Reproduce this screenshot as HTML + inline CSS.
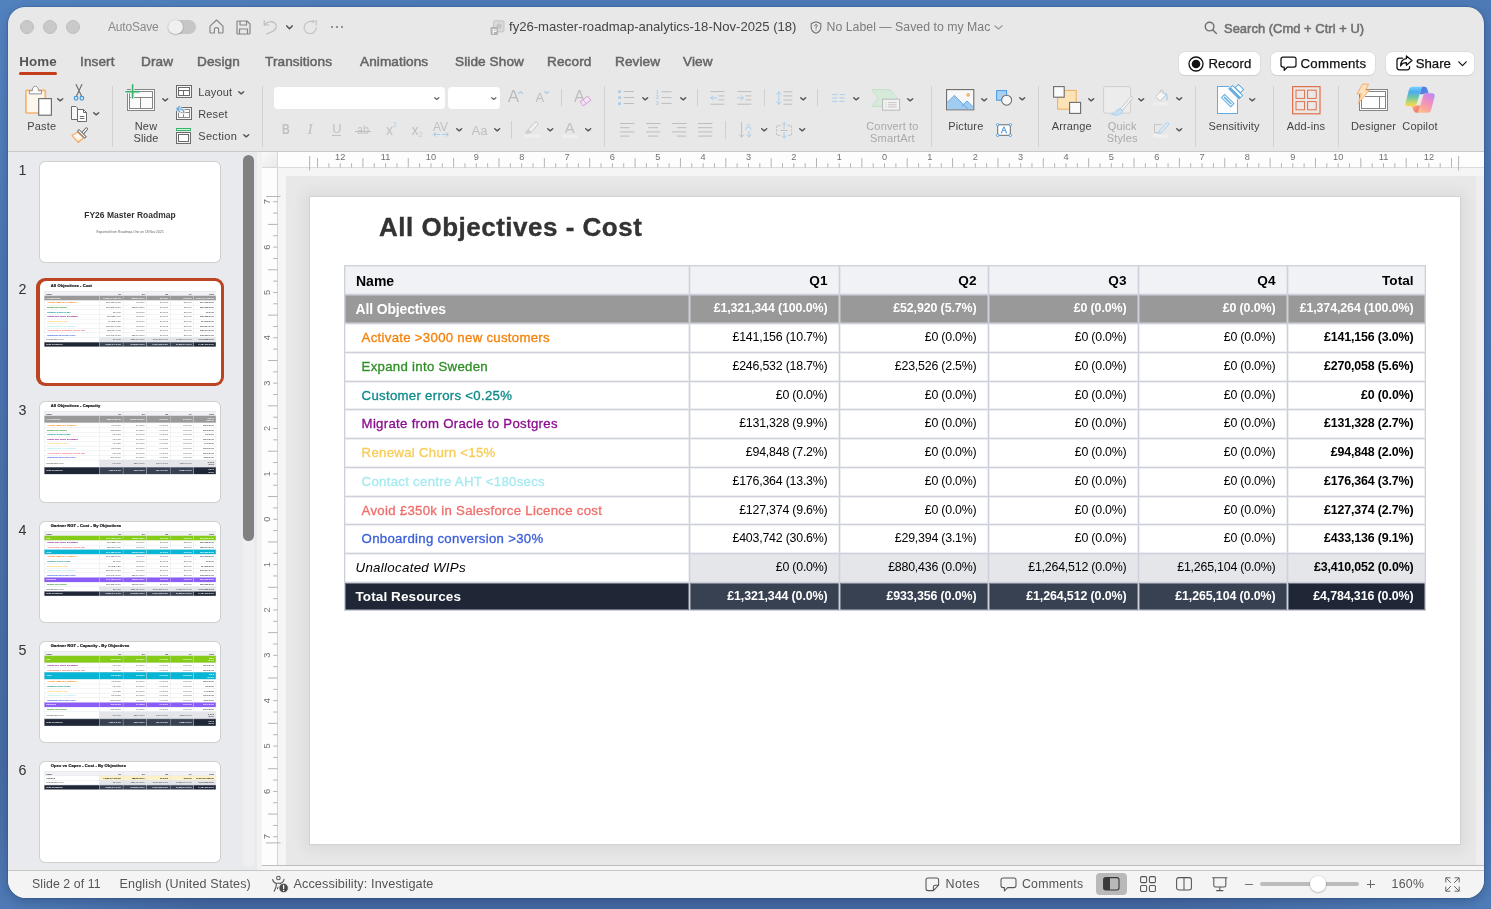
<!DOCTYPE html>
<html>
<head>
<meta charset="utf-8">
<title>PowerPoint</title>
<style>
*{box-sizing:border-box;margin:0;padding:0}
html,body{width:1491px;height:909px;overflow:hidden}
body{font-family:"Liberation Sans",sans-serif;background:#4a73ad;position:relative;
  background:radial-gradient(ellipse 700px 400px at 0% 0%,#5182be 0%,rgba(81,130,190,0) 65%),radial-gradient(ellipse 500px 260px at 100% 100%,#4f7cb7 0%,rgba(79,124,183,0) 70%),radial-gradient(ellipse 300px 200px at 0% 100%,#4e7ab5 0%,rgba(78,122,181,0) 70%),linear-gradient(180deg,#4d7ab6 0%,#4a73ad 45%,#4568a0 100%);}
.abs{position:absolute}
#win{position:absolute;left:8px;top:7px;width:1476px;height:891px;border-radius:17px 17px 18px 18px;background:#e8e8e8;overflow:hidden;box-shadow:0 0 0 .5px rgba(30,60,110,.4),0 3px 10px rgba(10,30,70,.28)}
/* everything inside #win uses page coords via #pg offset */
#pg{position:absolute;left:-8px;top:-7px;width:1491px;height:909px;will-change:transform}
.t{position:absolute;white-space:nowrap;line-height:1}
.tl{width:14px;height:14px;border-radius:50%;background:#c9c9c9;border:1px solid #bdbdbd;top:20px}
.tab{font-size:13.6px;color:#656565;top:54.5px;-webkit-text-stroke:.5px #656565;letter-spacing:.1px}
.lbl{font-size:11px;color:#454545;text-align:center;transform:translateX(-50%);letter-spacing:.15px}
.lbl.d{color:#a9a9a9}
.sep{position:absolute;margin-left:-1px;width:1px;background:#d2d2d2;top:86px;height:61px}
.ssep{position:absolute;width:1px;background:#d0d0d0}
svg{position:absolute;overflow:visible}
.btn{position:absolute;top:52px;height:22.5px;background:#fff;border-radius:6px;box-shadow:0 0 0 .5px #d4d4d4,0 .5px 1px rgba(0,0,0,.12)}
.btn .t{font-size:13.2px;color:#111;top:4.7px;-webkit-text-stroke:.25px #111}
.st{font-size:12.5px;color:#555;top:877.5px}
.num{font-size:14.3px;color:#333;left:18.6px}
.thumb{position:absolute;left:40.4px;width:179.4px;height:99.8px;background:#fff;border-radius:5px;box-shadow:0 0 0 1px #cfcfd2;overflow:hidden}
.thumb .sc{position:absolute;left:0;top:0;width:1150px;height:647px;transform:scale(.15652);transform-origin:0 0}
/* slide content */
.sc .title{-webkit-text-stroke:1.5px #222!important;color:#222}
.slide{position:absolute;background:#fff;width:1150px;height:647px;overflow:hidden}
.title{position:absolute;left:69px;top:15px;font-size:26px;font-weight:bold;color:#333;letter-spacing:.5px;line-height:30px;-webkit-text-stroke:.35px #333;white-space:nowrap}
table.g{position:absolute;left:34px;top:68px;border-collapse:separate;border-spacing:0;table-layout:fixed;width:1082px;font-size:13px;color:#000;border-right:1px solid #ced1db;border-bottom:1px solid #ced1db}
table.g td{border-left:1px solid #ced1db;border-top:1px solid #ced1db;height:29px;padding:0 11.5px 1.4px 0;text-align:right;white-space:nowrap;overflow:hidden;letter-spacing:-.22px;line-height:14px;font-size:12.4px;vertical-align:middle;box-shadow:inset 1px 1px 0 rgba(214,217,226,.42),inset -1px -1px 0 rgba(214,217,226,.42)}
table.g td:first-child{text-align:left;padding:0 0 0 10.5px;letter-spacing:0;font-size:13px}
table.g tr.h td{background:#f1f2f5;font-weight:bold;font-size:13.6px;letter-spacing:0;padding-top:2px;padding-bottom:0}
table.g tr.h td:first-child{padding-top:2px;padding-left:11px;font-size:14px}
table.g tr.all td{background:#999;color:#fff;font-weight:bold;letter-spacing:-.1px}
table.g tr.all td:first-child{font-size:13.9px;letter-spacing:-.1px;padding-top:0}
table.g tr.o td:first-child{padding-left:16.6px;font-size:13.2px;letter-spacing:.3px;-webkit-text-stroke:.32px}
table.g td:last-child{font-weight:bold;letter-spacing:-.14px}
table.g tr.u td{background:#e5e6ea}
table.g tr.u td:first-child{background:#fff;font-style:italic;font-size:13.3px;letter-spacing:.3px}
table.g tr.tot td{background:#374151;color:#fff;font-weight:bold;letter-spacing:-.1px}
table.g tr.tot td:first-child,table.g tr.tot td:last-child{background:#1f2737}
table.g tr.tot td:first-child{font-size:13.5px;letter-spacing:.1px}
table.g tr.grp td{color:#fff;font-weight:bold}
table.g.th{left:27px;top:64px;width:1098px;border-right-width:2px;border-bottom-width:2px;border-color:#d8dae2}
table.g.th td{box-shadow:none;border-left-width:2px;border-top-width:2px;border-color:#d8dae2;line-height:16px;height:29.6px;padding-top:5.8px;padding-bottom:5.8px;color:#3a3a3a}
table.g.th tr td,table.g.th tr td:first-child{padding-top:5.8px}
table.g.th tr.all td,table.g.th tr.tot td,table.g.th tr.grp td{color:#fff}
</style>
</head>
<body>
<div id="win"><div id="pg">
<!-- ===== TITLE BAR ===== -->
<div class="abs tl" style="left:20px"></div>
<div class="abs tl" style="left:43px"></div>
<div class="abs tl" style="left:66px"></div>
<div class="t" style="left:108px;top:20.5px;font-size:12px;color:#8a8a8a;letter-spacing:-.18px">AutoSave</div>
<div class="abs" style="left:168px;top:20px;width:28px;height:14px;border-radius:7px;background:#c6c6c6"></div>
<div class="abs" style="left:168px;top:19.5px;width:14.5px;height:14.5px;border-radius:50%;background:#f0f0f0;box-shadow:0 .5px 1.5px rgba(0,0,0,.35)"></div>
<!-- home -->
<svg style="left:209px;top:19px" width="15" height="15" viewBox="0 0 15 15" fill="none" stroke="#858585" stroke-width="1.15" stroke-linejoin="round" stroke-linecap="round"><path d="M1 7.2 L7.5 1 L14 7.2 V13.2 Q14 14 13.2 14 H9.6 V9.8 Q9.6 8.6 7.5 8.6 Q5.4 8.6 5.4 9.8 V14 H1.8 Q1 14 1 13.2 Z"/></svg>
<!-- save -->
<svg style="left:236px;top:19.5px" width="15" height="15" viewBox="0 0 15 15" fill="none" stroke="#858585" stroke-width="1.15" stroke-linejoin="round"><path d="M2 1 H11 L14 4 V13 Q14 14 13 14 H2 Q1 14 1 13 V2 Q1 1 2 1 Z"/><path d="M4 1 V5 H10.5 V1"/><path d="M3.5 14 V9 H11.5 V14"/></svg>
<!-- undo -->
<svg style="left:263px;top:19px" width="15" height="16" viewBox="0 0 15 16" fill="none" stroke="#bcbcbc" stroke-width="1.15" stroke-linecap="round" stroke-linejoin="round"><path d="M1.2 1.5 V6 H5.8"/><path d="M1.5 5.8 C4 2.2 9.5 1.6 12.2 4.4 C14.6 7 13 10 10 12.2 L3.5 15"/></svg>
<svg style="left:285.5px;top:24.5px" width="7" height="5" viewBox="0 0 7 5" fill="none" stroke="#555" stroke-width="1.5" stroke-linecap="round" stroke-linejoin="round"><path d="M.8 .9 L3.5 3.8 L6.2 .9"/></svg>
<!-- redo -->
<svg style="left:303px;top:19.5px" width="15" height="15" viewBox="0 0 15 15" fill="none" stroke="#c2c2c2" stroke-width="1.15" stroke-linecap="round" stroke-linejoin="round"><path d="M13.3 7.6 A6.1 6.1 0 1 1 10.6 2.5"/><path d="M9.2 .9 L13.4 1.1 L13.1 5"/></svg>
<!-- dots -->
<div class="abs" style="left:330.5px;top:25.8px;width:2.6px;height:2.6px;border-radius:50%;background:#777;box-shadow:5px 0 0 #777,10px 0 0 #777"></div>
<!-- doc icon -->
<svg style="left:490px;top:20px" width="15" height="16" viewBox="0 0 15 16"><rect x="3.5" y=".8" width="10.5" height="11" rx="1.2" fill="#d9d9d9" stroke="#bdbdbd" stroke-width=".8"/><circle cx="9" cy="6" r="2.6" fill="#c4c4c4"/><rect x=".5" y="7" width="7.5" height="8" rx="1.2" fill="#b4b4b4"/><text x="2.2" y="13.6" font-family="Liberation Sans" font-size="7" font-weight="bold" fill="#fff">P</text></svg>
<div class="t" style="left:509px;top:20.3px;font-size:13.1px;color:#454545">fy26-master-roadmap-analytics-18-Nov-2025 (18)</div>
<!-- shield -->
<svg style="left:809.5px;top:20.5px" width="12" height="13" viewBox="0 0 12 13" fill="none" stroke="#6f6f6f" stroke-width="1.05" stroke-linejoin="round"><path d="M6 .8 L10.8 2.5 V6.2 C10.8 9.3 8.6 11.3 6 12.3 C3.4 11.3 1.2 9.3 1.2 6.2 V2.5 Z"/><path d="M4.7 4.9 Q4.8 3.6 6 3.6 Q7.3 3.6 7.3 4.8 Q7.3 5.6 6 6.3 V7.2" stroke-width=".95" stroke-linecap="round"/><circle cx="6" cy="9" r=".6" fill="#6f6f6f" stroke="none"/></svg>
<div class="t" style="left:826.5px;top:20.6px;font-size:12.3px;color:#7c7c7c;letter-spacing:.02px">No Label — Saved to my Mac</div>
<svg style="left:993.5px;top:24.5px" width="9" height="5" viewBox="0 0 9 5" fill="none" stroke="#9a9a9a" stroke-width="1.2" stroke-linecap="round" stroke-linejoin="round"><path d="M.8 .8 L4.5 4 L8.2 .8"/></svg>
<!-- search -->
<svg style="left:1204px;top:21px" width="14" height="14" viewBox="0 0 14 14" fill="none" stroke="#6e6e6e" stroke-width="1.4" stroke-linecap="round"><circle cx="5.6" cy="5.6" r="4.3"/><path d="M8.9 8.9 L12.4 12.4"/></svg>
<div class="t" style="left:1224px;top:23.1px;font-size:12.9px;color:#707070;-webkit-text-stroke:.55px #707070;letter-spacing:.05px">Search (Cmd + Ctrl + U)</div>

<!-- ===== TABS ===== -->
<div class="t tab" style="left:19.3px;font-weight:bold;font-size:13.4px;color:#555;-webkit-text-stroke:0">Home</div>
<div class="abs" style="left:19px;top:71.7px;width:38px;height:3px;border-radius:1.5px;background:#c43e1c"></div>
<div class="t tab" style="left:80px">Insert</div>
<div class="t tab" style="left:141px">Draw</div>
<div class="t tab" style="left:197px">Design</div>
<div class="t tab" style="left:265px">Transitions</div>
<div class="t tab" style="left:360px">Animations</div>
<div class="t tab" style="left:455px">Slide Show</div>
<div class="t tab" style="left:547px">Record</div>
<div class="t tab" style="left:615px">Review</div>
<div class="t tab" style="left:683px">View</div>
<!-- right buttons -->
<div class="btn" style="left:1178.5px;width:81px">
  <svg style="left:9px;top:3.5px" width="16" height="16" viewBox="0 0 16 16"><circle cx="8" cy="8" r="7" fill="none" stroke="#111" stroke-width="1.3"/><circle cx="8" cy="8" r="4.3" fill="#111"/></svg>
  <div class="t" style="left:30px;letter-spacing:.05px">Record</div></div>
<div class="btn" style="left:1271px;width:103.5px">
  <svg style="left:9px;top:4px" width="17" height="16" viewBox="0 0 17 16" fill="none" stroke="#111" stroke-width="1.25" stroke-linejoin="round"><path d="M3 1 H14 Q16 1 16 3 V9 Q16 11 14 11 H7.5 L4.2 14.4 V11 H3 Q1 11 1 9 V3 Q1 1 3 1 Z"/></svg>
  <div class="t" style="left:29.6px;letter-spacing:.25px">Comments</div></div>
<div class="btn" style="left:1385.5px;width:88px">
  <svg style="left:10px;top:3px" width="17" height="16" viewBox="0 0 17 16" fill="none" stroke="#111" stroke-width="1.25" stroke-linejoin="round" stroke-linecap="round"><path d="M6.5 3.2 H3.2 Q1 3.2 1 5.4 V12.6 Q1 14.8 3.2 14.8 H11.4 Q13.6 14.8 13.6 12.6 V11.6"/><path d="M10.4 .9 L16 5.6 L10.4 10.3 V7.6 C7.4 7.5 5.6 8.8 4.6 11 C4.8 6.6 7 3.9 10.4 3.6 Z"/></svg>
  <div class="t" style="left:30.2px">Share</div>
  <svg style="left:72.5px;top:9px" width="9" height="6" viewBox="0 0 9 6" fill="none" stroke="#111" stroke-width="1.2" stroke-linecap="round" stroke-linejoin="round"><path d="M.8 .8 L4.5 4.6 L8.2 .8"/></svg></div>
<!-- ===== RIBBON ===== -->
<svg style="left:24px;top:85px" width="30" height="32" viewBox="0 0 30 32" ><rect x="1.9" y="5.4" width="19.4" height="22.6" rx=".8" fill="#fdf6ec" stroke="#f3b56f" stroke-width="1.7"/><path d="M5.3 8.9 V5.7 H8.3 Q8.5 1.3 11.4 1.3 Q14.3 1.3 14.5 5.7 H17.5 V8.9 Z" fill="#fbfbfb" stroke="#8c8c8c" stroke-width=".95" stroke-linejoin="round"/><rect x="14.7" y="13.6" width="12.7" height="16.6" fill="#fff" stroke="#6b6b6b" stroke-width="1.15"/></svg>
<svg style="left:57.0px;top:98.0px" width="6.4" height="3.6" viewBox="0 0 6.4 3.6" fill="none" stroke="#555" stroke-width="1.4" stroke-linecap="round" stroke-linejoin="round"><path d="M.7 .7 L3.2 2.9000000000000004 L5.7 .7"/></svg>
<div class="t lbl" style="left:41.8px;top:121.1px;font-size:11px">Paste</div>
<svg style="left:73px;top:84px" width="12" height="17" viewBox="0 0 12 17" ><path d="M3.1 .6 L8.7 12.5 M8.9 .6 L3.3 12.5" stroke="#6b6b6b" stroke-width="1.1" fill="none" stroke-linecap="round"/><circle cx="3.1" cy="14.2" r="1.85" fill="none" stroke="#3f98de" stroke-width="1.15"/><circle cx="8.9" cy="14.2" r="1.85" fill="none" stroke="#3f98de" stroke-width="1.15"/></svg>
<svg style="left:70px;top:105px" width="18" height="18" viewBox="0 0 18 18" ><path d="M7.5 4.5 V3 L6 1.5 H1.5 V14.5 H7.5" fill="#f8f8f8" stroke="#6b6b6b" stroke-width="1" stroke-linejoin="round"/><path d="M7.5 4.5 H13.5 L16.5 7.5 V16.5 H7.5 Z" fill="#fff" stroke="#6b6b6b" stroke-width="1" stroke-linejoin="round"/><path d="M13.5 4.5 V7.5 H16.5" fill="none" stroke="#6b6b6b" stroke-width="1"/><path d="M9.8 11.5 H14.3 M9.8 13.5 H14.3" stroke="#6b6b6b" stroke-width="1"/></svg>
<svg style="left:92.8px;top:112.2px" width="6.4" height="3.6" viewBox="0 0 6.4 3.6" fill="none" stroke="#555" stroke-width="1.4" stroke-linecap="round" stroke-linejoin="round"><path d="M.7 .7 L3.2 2.9000000000000004 L5.7 .7"/></svg>
<svg style="left:70px;top:127px" width="19" height="17" viewBox="0 0 19 17" ><defs><linearGradient id="fp" x1=".6" y1="0" x2=".3" y2="1"><stop offset="0" stop-color="#ffffff"/><stop offset=".55" stop-color="#fff6ea"/><stop offset="1" stop-color="#fbcf98"/></linearGradient></defs><path d="M7.6 5.2 L2 8.4 L8.1 15.5 L13.4 11 Z" fill="url(#fp)" stroke="#f0a45e" stroke-width="1.05" stroke-linejoin="round"/><path d="M12.6 6.4 L16.4 2" stroke="#6b6b6b" stroke-width="3.2" stroke-linecap="round"/><path d="M12.6 6.4 L16.4 2" stroke="#fff" stroke-width="1.3" stroke-linecap="round"/><path d="M9 4 L14.7 9.7" stroke="#6b6b6b" stroke-width="3" stroke-linecap="square"/><path d="M9 4 L14.7 9.7" stroke="#fff" stroke-width="1.2" stroke-linecap="square"/></svg>
<div class="sep" style="left:112.5px"></div>
<svg style="left:125px;top:83px" width="31" height="29" viewBox="0 0 31 29" ><rect x="2.5" y="6.5" width="27" height="21" fill="#fdfdfd" stroke="#858585" stroke-width="1"/><rect x="4.5" y="8.5" width="23" height="17" fill="#fbfbfb" stroke="#858585" stroke-width="1"/><path d="M4.5 14.5 H27.5 M15.5 14.5 V25.5" stroke="#858585" stroke-width="1"/><path d="M7.6 1.2 V15.6 M.4 8.8 H14.8" stroke="#e8e8e8" stroke-width="3.6"/><path d="M7.6 1.2 V15.6 M.4 8.8 H14.8" stroke="#35b36a" stroke-width="1.5"/></svg>
<svg style="left:161.8px;top:98.0px" width="6.4" height="3.6" viewBox="0 0 6.4 3.6" fill="none" stroke="#555" stroke-width="1.4" stroke-linecap="round" stroke-linejoin="round"><path d="M.7 .7 L3.2 2.9000000000000004 L5.7 .7"/></svg>
<div class="t lbl" style="left:146px;top:121.1px;font-size:11px">New</div>
<div class="t lbl" style="left:146px;top:132.7px;font-size:11px">Slide</div>
<svg style="left:176px;top:85px" width="16" height="13" viewBox="0 0 16 13" ><rect x=".5" y=".5" width="15" height="12" fill="#f5f5f5" stroke="#6b6b6b" stroke-width="1"/><rect x="2.5" y="2.5" width="11" height="8" fill="#fff" stroke="#6b6b6b" stroke-width="1"/><path d="M2.5 5.5 H13.5 M7.5 5.5 V10.5" stroke="#6b6b6b" stroke-width="1"/></svg>
<div class="t" style="left:198.3px;top:86.8px;font-size:11px;color:#454545;letter-spacing:.15px">Layout</div>
<svg style="left:237.8px;top:90.6px" width="6.4" height="3.6" viewBox="0 0 6.4 3.6" fill="none" stroke="#555" stroke-width="1.4" stroke-linecap="round" stroke-linejoin="round"><path d="M.7 .7 L3.2 2.9000000000000004 L5.7 .7"/></svg>
<svg style="left:176px;top:106px" width="16" height="15" viewBox="0 0 16 15" ><rect x=".5" y="1.5" width="15" height="12" fill="#f5f5f5" stroke="#6b6b6b" stroke-width="1"/><rect x="2.5" y="3.5" width="11" height="8" fill="#fff" stroke="#8a8a8a" stroke-width="1"/><path d="M2.5 6.5 H13.5 M7.5 6.5 V11.5" stroke="#8a8a8a" stroke-width="1"/><path d="M3.6 .4 L.9 3 L3.6 5.6 M1 3 H4.4 Q7.8 3 7.8 6.8" fill="none" stroke="#e8e8e8" stroke-width="3.2" stroke-linecap="round" stroke-linejoin="round"/><path d="M3.6 .4 L.9 3 L3.6 5.6 M1 3 H4.4 Q7.8 3 7.8 6.8" fill="none" stroke="#56a6e4" stroke-width="1.2" stroke-linecap="round" stroke-linejoin="round"/></svg>
<div class="t" style="left:198.3px;top:108.8px;font-size:11px;color:#454545;letter-spacing:.1px">Reset</div>
<svg style="left:176px;top:128px" width="16" height="17" viewBox="0 0 16 17" ><rect x=".5" y=".5" width="14" height="2" fill="#d6f2e0" stroke="#37b46c" stroke-width="1"/><rect x=".5" y="4.5" width="14" height="11" fill="#f5f5f5" stroke="#6b6b6b" stroke-width="1"/><rect x="2.5" y="6.5" width="10" height="7" fill="#fff" stroke="#6b6b6b" stroke-width="1"/></svg>
<div class="t" style="left:198.3px;top:130.6px;font-size:11px;color:#454545;letter-spacing:.3px">Section</div>
<svg style="left:242.8px;top:134.4px" width="6.4" height="3.6" viewBox="0 0 6.4 3.6" fill="none" stroke="#555" stroke-width="1.4" stroke-linecap="round" stroke-linejoin="round"><path d="M.7 .7 L3.2 2.9000000000000004 L5.7 .7"/></svg>
<div class="sep" style="left:262.5px"></div>
<div class="abs" style="left:274px;top:86.5px;width:170.5px;height:22.5px;background:#fff;border-radius:4px"></div>
<svg style="left:434.2px;top:96.7px" width="5.6" height="3.2" viewBox="0 0 5.6 3.2" fill="none" stroke="#666" stroke-width="1.2" stroke-linecap="round" stroke-linejoin="round"><path d="M.7 .7 L2.8 2.5 L4.8999999999999995 .7"/></svg>
<div class="abs" style="left:447.8px;top:86.5px;width:52.4px;height:22.5px;background:#fff;border-radius:4px"></div>
<svg style="left:490.6px;top:96.7px" width="5.6" height="3.2" viewBox="0 0 5.6 3.2" fill="none" stroke="#666" stroke-width="1.2" stroke-linecap="round" stroke-linejoin="round"><path d="M.7 .7 L2.8 2.5 L4.8999999999999995 .7"/></svg>
<div class="t" style="left:507.7px;top:88.1px;font-size:17px;color:#bcbcbc">A</div>
<svg style="left:518.1px;top:91.4px" width="5.2" height="3.0" viewBox="0 0 5.2 3.0" fill="none" stroke="#a3cdee" stroke-width="1.2" stroke-linecap="round" stroke-linejoin="round"><path d="M.7 2.3 L2.6 .7 L4.5 2.3"/></svg>
<div class="t" style="left:535.5px;top:92.1px;font-size:12.9px;color:#bcbcbc">A</div>
<svg style="left:544.0px;top:91.2px" width="5.2" height="3.0" viewBox="0 0 5.2 3.0" fill="none" stroke="#a3cdee" stroke-width="1.2" stroke-linecap="round" stroke-linejoin="round"><path d="M.7 .7 L2.6 2.3 L4.5 .7"/></svg>
<div class="ssep" style="left:560.6px;top:89px;height:17px"></div>
<div class="t" style="left:574px;top:88.6px;font-size:16px;color:#bcbcbc">A</div>
<svg style="left:580px;top:96px" width="11" height="10" viewBox="0 0 11 10" ><g transform="rotate(-38 5.5 5)"><rect x=".8" y="2.4" width="9.4" height="5.2" fill="#f3e6f4" stroke="#d7a5db" stroke-width=".95"/><path d="M4.4 2.4 V7.6" stroke="#d7a5db" stroke-width=".9"/></g></svg>
<div class="t" style="left:281.6px;top:122.6px;font-size:13.8px;font-weight:bold;color:#c0c0c0;transform:scaleX(.78);transform-origin:0 50%">B</div>
<div class="t" style="left:307.6px;top:121.3px;font-size:15.6px;font-style:italic;color:#c0c0c0;font-family:'Liberation Serif',serif">I</div>
<div class="t" style="left:332.2px;top:122.8px;font-size:12.8px;color:#c0c0c0;border-bottom:1px solid #c0c0c0;padding-bottom:0;height:12.8px;box-sizing:border-box">U</div>
<div class="t" style="left:356.6px;top:122.9px;font-size:13.2px;color:#c4c4c4;transform:scaleX(.82);transform-origin:0 50%">ab</div>
<div class="abs" style="left:354.8px;top:131.2px;width:16.2px;height:1px;background:#bdbdbd"></div>
<div class="t" style="left:386px;top:122.6px;font-size:14px;color:#c0c0c0">x</div>
<div class="t" style="left:393px;top:122.2px;font-size:6.3px;color:#a9cdea">2</div>
<div class="t" style="left:411.6px;top:122.6px;font-size:14px;color:#c0c0c0">x</div>
<div class="t" style="left:419px;top:132px;font-size:6.5px;color:#a9cdea">2</div>
<div class="t" style="left:433px;top:120.8px;font-size:12px;color:#c0c0c0;letter-spacing:0">AV</div>
<svg style="left:433.2px;top:132.2px" width="16" height="5" viewBox="0 0 16 5" ><path d="M.6 2.5 H6.8 M9.2 2.5 H15.4 M2.8 .5 L.6 2.5 L2.8 4.5 M13.2 .5 L15.4 2.5 L13.2 4.5" fill="none" stroke="#a9cdea" stroke-width="1" stroke-linecap="round" stroke-linejoin="round"/></svg>
<svg style="left:455.6px;top:128.2px" width="6.4" height="3.6" viewBox="0 0 6.4 3.6" fill="none" stroke="#555" stroke-width="1.4" stroke-linecap="round" stroke-linejoin="round"><path d="M.7 .7 L3.2 2.9000000000000004 L5.7 .7"/></svg>
<div class="t" style="left:471.4px;top:123.6px;font-size:13px;color:#c0c0c0;letter-spacing:.3px">Aa</div>
<svg style="left:493.7px;top:128.2px" width="6.4" height="3.6" viewBox="0 0 6.4 3.6" fill="none" stroke="#555" stroke-width="1.4" stroke-linecap="round" stroke-linejoin="round"><path d="M.7 .7 L3.2 2.9000000000000004 L5.7 .7"/></svg>
<div class="ssep" style="left:511.2px;top:121px;height:17.5px"></div>
<svg style="left:524px;top:121px" width="17" height="17" viewBox="0 0 17 17" ><path d="M4.2 8.6 L10.8 1.4 Q12 .4 13.4 1.6 Q14.6 3 13.6 4.2 L7 11.4 Z" fill="#f1f1f1" stroke="#c6c6c6" stroke-width="1" stroke-linejoin="round"/><path d="M4 8.8 L6.8 11.6 L4 12.4 L1.6 12.2 Z" fill="#d0d0d0" stroke="#c6c6c6" stroke-width=".7" stroke-linejoin="round"/><rect x=".4" y="13.5" width="15.6" height="3" fill="#efefef"/></svg>
<svg style="left:546.5px;top:128.2px" width="6.4" height="3.6" viewBox="0 0 6.4 3.6" fill="none" stroke="#555" stroke-width="1.4" stroke-linecap="round" stroke-linejoin="round"><path d="M.7 .7 L3.2 2.9000000000000004 L5.7 .7"/></svg>
<div class="t" style="left:564.8px;top:120.2px;font-size:15px;color:#c0c0c0">A</div>
<div class="abs" style="left:562px;top:134.5px;width:15.6px;height:3px;background:#efefef"></div>
<svg style="left:584.6px;top:128.2px" width="6.4" height="3.6" viewBox="0 0 6.4 3.6" fill="none" stroke="#555" stroke-width="1.4" stroke-linecap="round" stroke-linejoin="round"><path d="M.7 .7 L3.2 2.9000000000000004 L5.7 .7"/></svg>
<div class="sep" style="left:604.5px"></div>
<svg style="left:618px;top:90px" width="16" height="15" viewBox="0 0 16 15" ><rect x=".2" y="0.19999999999999996" width="2.8" height="2.8" fill="#a9cdea"/><path d="M5.6 1.5 H16" stroke="#bdbdbd" stroke-width="1"/><rect x=".2" y="6.2" width="2.8" height="2.8" fill="#a9cdea"/><path d="M5.6 7.5 H16" stroke="#bdbdbd" stroke-width="1"/><rect x=".2" y="12.2" width="2.8" height="2.8" fill="#a9cdea"/><path d="M5.6 13.5 H16" stroke="#bdbdbd" stroke-width="1"/></svg>
<svg style="left:641.8px;top:96.5px" width="6.4" height="3.6" viewBox="0 0 6.4 3.6" fill="none" stroke="#555" stroke-width="1.4" stroke-linecap="round" stroke-linejoin="round"><path d="M.7 .7 L3.2 2.9000000000000004 L5.7 .7"/></svg>
<svg style="left:656.4px;top:90px" width="16" height="15" viewBox="0 0 16 15" ><text x="0" y="3.6" font-size="4.8" font-family="Liberation Sans" font-weight="bold" fill="#a9cdea">1</text><path d="M5.4 1.8 H15.6" stroke="#bdbdbd" stroke-width="1"/><text x="0" y="9.4" font-size="4.8" font-family="Liberation Sans" font-weight="bold" fill="#a9cdea">2</text><path d="M5.4 7.6 H15.6" stroke="#bdbdbd" stroke-width="1"/><text x="0" y="15.200000000000001" font-size="4.8" font-family="Liberation Sans" font-weight="bold" fill="#a9cdea">3</text><path d="M5.4 13.4 H15.6" stroke="#bdbdbd" stroke-width="1"/></svg>
<svg style="left:679.6px;top:96.5px" width="6.4" height="3.6" viewBox="0 0 6.4 3.6" fill="none" stroke="#555" stroke-width="1.4" stroke-linecap="round" stroke-linejoin="round"><path d="M.7 .7 L3.2 2.9000000000000004 L5.7 .7"/></svg>
<div class="ssep" style="left:697.4px;top:89px;height:17.400000000000006px"></div>
<svg style="left:710.4px;top:90.6px" width="15" height="14" viewBox="0 0 15 14" ><path d="M.4 .6 H14.4 M8.4 4.9 H14.4 M8.4 8.9 H14.4 M.4 13.2 H14.4" stroke="#bdbdbd" stroke-width="1"/><path d="M.8 6.9 H6.6 M3 4.8 L.8 6.9 L3 9" fill="none" stroke="#a9cdea" stroke-width="1" stroke-linecap="round" stroke-linejoin="round"/></svg>
<svg style="left:736.6px;top:90.6px" width="15" height="14" viewBox="0 0 15 14" ><path d="M.4 .6 H14.4 M8.4 4.9 H14.4 M8.4 8.9 H14.4 M.4 13.2 H14.4" stroke="#bdbdbd" stroke-width="1"/><path d="M.6 6.9 H6.4 M4.2 4.8 L6.4 6.9 L4.2 9" fill="none" stroke="#a9cdea" stroke-width="1" stroke-linecap="round" stroke-linejoin="round"/></svg>
<div class="ssep" style="left:764.2px;top:89px;height:17.400000000000006px"></div>
<svg style="left:776.4px;top:90.6px" width="17" height="14" viewBox="0 0 17 14" ><path d="M7.4 .8 H16.4 M7.4 4.9 H16.4 M7.4 9 H16.4 M7.4 13.2 H16.4" stroke="#bdbdbd" stroke-width="1"/><path d="M2.8 .8 V13.2 M.6 3 L2.8 .8 L5 3 M.6 11 L2.8 13.2 L5 11" fill="none" stroke="#a9cdea" stroke-width="1" stroke-linecap="round" stroke-linejoin="round"/></svg>
<svg style="left:799.8px;top:96.5px" width="6.4" height="3.6" viewBox="0 0 6.4 3.6" fill="none" stroke="#555" stroke-width="1.4" stroke-linecap="round" stroke-linejoin="round"><path d="M.7 .7 L3.2 2.9000000000000004 L5.7 .7"/></svg>
<div class="ssep" style="left:817.4px;top:89px;height:17.400000000000006px"></div>
<svg style="left:831.8px;top:93.6px" width="13" height="8" viewBox="0 0 13 8" ><path d="M.2 .6 H5.4 M7.4 .6 H12.6 M.2 4 H5.4 M7.4 4 H12.6 M.2 7.4 H5.4 M7.4 7.4 H12.6" stroke="#a9cdea" stroke-width="1"/></svg>
<svg style="left:852.7px;top:96.5px" width="6.4" height="3.6" viewBox="0 0 6.4 3.6" fill="none" stroke="#555" stroke-width="1.4" stroke-linecap="round" stroke-linejoin="round"><path d="M.7 .7 L3.2 2.9000000000000004 L5.7 .7"/></svg>
<svg style="left:871px;top:89px" width="30" height="22" viewBox="0 0 30 22" ><path d="M.8 .6 H19 L26 9 L19 17.4 H.8 L7 9 Z" fill="#d5ead9" stroke="#c2dfc8" stroke-width=".9" stroke-linejoin="round"/><rect x="11.6" y="10.2" width="17" height="11" fill="#f2f2f2" stroke="#b9b9b9" stroke-width="1"/><path d="M14.6 13.6 H15.6 M17.2 13.6 H25.6 M14.6 15.8 H15.6 M17.2 15.8 H25.6 M14.6 18 H15.6 M17.2 18 H25.6" stroke="#b9b9b9" stroke-width=".8"/></svg>
<svg style="left:906.5px;top:98.2px" width="6.4" height="3.6" viewBox="0 0 6.4 3.6" fill="none" stroke="#555" stroke-width="1.4" stroke-linecap="round" stroke-linejoin="round"><path d="M.7 .7 L3.2 2.9000000000000004 L5.7 .7"/></svg>
<div class="t lbl d" style="left:892.4px;top:121.3px;font-size:11px">Convert to</div>
<div class="t lbl d" style="left:892.4px;top:132.9px;font-size:11px">SmartArt</div>
<svg style="left:619.6px;top:122.8px" width="15" height="14" viewBox="0 0 15 14" ><path d="M0 0.5 H14.4" stroke="#bdbdbd" stroke-width="1"/><path d="M0 4.7 H9.6" stroke="#bdbdbd" stroke-width="1"/><path d="M0 8.9 H14.4" stroke="#bdbdbd" stroke-width="1"/><path d="M0 13.100000000000001 H9.6" stroke="#bdbdbd" stroke-width="1"/></svg>
<svg style="left:645.6px;top:122.8px" width="15" height="14" viewBox="0 0 15 14" ><path d="M0 0.5 H14.4" stroke="#bdbdbd" stroke-width="1"/><path d="M2.4 4.7 H12" stroke="#bdbdbd" stroke-width="1"/><path d="M0 8.9 H14.4" stroke="#bdbdbd" stroke-width="1"/><path d="M2.4 13.100000000000001 H12" stroke="#bdbdbd" stroke-width="1"/></svg>
<svg style="left:671.8px;top:122.8px" width="15" height="14" viewBox="0 0 15 14" ><path d="M0 0.5 H14.4" stroke="#bdbdbd" stroke-width="1"/><path d="M4.8 4.7 H14.4" stroke="#bdbdbd" stroke-width="1"/><path d="M0 8.9 H14.4" stroke="#bdbdbd" stroke-width="1"/><path d="M4.8 13.100000000000001 H14.4" stroke="#bdbdbd" stroke-width="1"/></svg>
<svg style="left:698px;top:122.8px" width="15" height="14" viewBox="0 0 15 14" ><path d="M0 0.5 H14.4" stroke="#bdbdbd" stroke-width="1"/><path d="M0 4.7 H14.4" stroke="#bdbdbd" stroke-width="1"/><path d="M0 8.9 H14.4" stroke="#bdbdbd" stroke-width="1"/><path d="M0 13.100000000000001 H14.4" stroke="#bdbdbd" stroke-width="1"/></svg>
<div class="ssep" style="left:725.2px;top:121px;height:17.80000000000001px"></div>
<svg style="left:739.4px;top:122px" width="14" height="16" viewBox="0 0 14 16" ><path d="M2.6 .4 V15 M.4 12.8 L2.6 15 L4.8 12.8" fill="none" stroke="#bdbdbd" stroke-width="1" stroke-linecap="round" stroke-linejoin="round"/><text x="6.2" y="7.6" font-size="9.4" font-family="Liberation Sans" fill="#a9cdea">A</text><path d="M10 9.4 V15 M7.8 12.8 L10 15 L12.2 12.8" fill="none" stroke="#a9cdea" stroke-width="1" stroke-linecap="round" stroke-linejoin="round"/></svg>
<svg style="left:760.5px;top:128.2px" width="6.4" height="3.6" viewBox="0 0 6.4 3.6" fill="none" stroke="#555" stroke-width="1.4" stroke-linecap="round" stroke-linejoin="round"><path d="M.7 .7 L3.2 2.9000000000000004 L5.7 .7"/></svg>
<svg style="left:775.8px;top:122px" width="17" height="16" viewBox="0 0 17 16" ><path d="M4.2 3.6 H.6 V13.4 H4.2 M12 3.6 H15.6 V13.4 H12" fill="none" stroke="#bdbdbd" stroke-width="1" stroke-dasharray="2.2 1.4"/><path d="M4.6 8.5 H11.6" stroke="#bdbdbd" stroke-width="1"/><path d="M8.1 .6 V6.6 M6 2.6 L8.1 .6 L10.2 2.6 M8.1 10.4 V16 M6 14 L8.1 16 L10.2 14" fill="none" stroke="#a9cdea" stroke-width="1" stroke-linecap="round" stroke-linejoin="round"/></svg>
<svg style="left:798.6px;top:128.2px" width="6.4" height="3.6" viewBox="0 0 6.4 3.6" fill="none" stroke="#555" stroke-width="1.4" stroke-linecap="round" stroke-linejoin="round"><path d="M.7 .7 L3.2 2.9000000000000004 L5.7 .7"/></svg>
<div class="sep" style="left:932px"></div>
<svg style="left:946px;top:89px" width="28.4" height="21.4" viewBox="0 0 28.4 21.4" ><rect x=".6" y=".6" width="27.2" height="20.2" fill="#f8f8f8" stroke="#6b6b6b" stroke-width="1.1"/><path d="M1.2 13.4 L8.4 6.4 L17.6 15.4 L21 12 L27.2 18 V20.2 H1.2 Z" fill="#9fccf0"/><path d="M1.2 13.4 L8.4 6.4 L22 20.2 M15.8 17 L21 12 L27.2 18" fill="none" stroke="#5aa3de" stroke-width=".9"/><circle cx="22.2" cy="5.8" r="1.9" fill="#f8b274"/></svg>
<svg style="left:980.8px;top:98.2px" width="6.4" height="3.6" viewBox="0 0 6.4 3.6" fill="none" stroke="#555" stroke-width="1.4" stroke-linecap="round" stroke-linejoin="round"><path d="M.7 .7 L3.2 2.9000000000000004 L5.7 .7"/></svg>
<div class="t lbl" style="left:965.8px;top:121.1px;font-size:11px">Picture</div>
<svg style="left:996px;top:90px" width="17" height="16" viewBox="0 0 17 16" ><rect x=".6" y=".6" width="10" height="9.6" fill="#a7d0f2" stroke="#4a98dc" stroke-width="1"/><circle cx="10.6" cy="10.2" r="5" fill="#f7f7f7" stroke="#6b6b6b" stroke-width="1.05"/></svg>
<svg style="left:1018.7px;top:96.5px" width="6.4" height="3.6" viewBox="0 0 6.4 3.6" fill="none" stroke="#555" stroke-width="1.4" stroke-linecap="round" stroke-linejoin="round"><path d="M.7 .7 L3.2 2.9000000000000004 L5.7 .7"/></svg>
<svg style="left:996px;top:123px" width="17" height="15" viewBox="0 0 17 15" ><rect x="1.7" y="1.8" width="12.6" height="10.5" fill="#fff" stroke="#6b6b6b" stroke-width="1"/><text x="5" y="9.9" font-size="8.8" font-family="Liberation Sans" fill="#4a98dc" stroke="#4a98dc" stroke-width=".3">A</text><g fill="#fff" stroke="#4a98dc" stroke-width=".9"><circle cx="1.7" cy="1.8" r="1.25"/><circle cx="14.3" cy="1.8" r="1.25"/><circle cx="1.7" cy="12.3" r="1.25"/><circle cx="14.3" cy="12.3" r="1.25"/></g></svg>
<div class="sep" style="left:1039.3px"></div>
<svg style="left:1053px;top:86px" width="29" height="28" viewBox="0 0 29 28" ><rect x="4.6" y="4.4" width="18.6" height="18.8" fill="#fbe3b6" stroke="#efae62" stroke-width="1"/><rect x=".6" y=".6" width="10.6" height="10.6" fill="#fafafa" stroke="#6b6b6b" stroke-width="1.1"/><rect x="16.6" y="16.4" width="11" height="11" fill="#fafafa" stroke="#6b6b6b" stroke-width="1.1"/></svg>
<svg style="left:1087.8px;top:98.2px" width="6.4" height="3.6" viewBox="0 0 6.4 3.6" fill="none" stroke="#555" stroke-width="1.4" stroke-linecap="round" stroke-linejoin="round"><path d="M.7 .7 L3.2 2.9000000000000004 L5.7 .7"/></svg>
<div class="t lbl" style="left:1071.8px;top:121.1px;font-size:11px">Arrange</div>
<svg style="left:1103px;top:86px" width="30" height="31" viewBox="0 0 30 31" ><rect x=".6" y=".6" width="27" height="26.6" rx="1.5" fill="#ececec" stroke="#cfcfcf" stroke-width="1"/><path d="M29 10.6 Q30 11.4 29.2 12.6 L19.6 24.4 L17.6 22.8 L27.4 11 Q28.2 10 29 10.6 Z" fill="#f4f4f4" stroke="#c4c4c4" stroke-width=".9"/><path d="M17.4 22.6 L19.8 24.6 C19.6 28 15 30.4 8.6 28.4 C12.2 27.6 13.2 23 17.4 22.6 Z" fill="#c7dff3" stroke="#a9cdea" stroke-width=".9" stroke-linejoin="round"/></svg>
<svg style="left:1137.8px;top:98.2px" width="6.4" height="3.6" viewBox="0 0 6.4 3.6" fill="none" stroke="#555" stroke-width="1.4" stroke-linecap="round" stroke-linejoin="round"><path d="M.7 .7 L3.2 2.9000000000000004 L5.7 .7"/></svg>
<div class="t lbl d" style="left:1122.2px;top:121.1px;font-size:11px">Quick</div>
<div class="t lbl d" style="left:1122.2px;top:132.7px;font-size:11px">Styles</div>
<svg style="left:1154px;top:89px" width="16" height="17" viewBox="0 0 16 17" ><path d="M1.7 7.6 L7.2 1.7 L11.7 6.2 L6.2 12.1 Z" fill="#f6f6f6" stroke="#c8c8c8" stroke-width="1" stroke-linejoin="round"/><path d="M5.9 3.6 Q6.1 .6 8 .6 Q9.7 .8 9.3 4.2" fill="none" stroke="#c8c8c8" stroke-width="1" stroke-linecap="round"/><path d="M11.6 4.4 Q14 7 12.7 10.8" fill="none" stroke="#a9cdea" stroke-width="1.3" stroke-linecap="round"/><rect x="-.8" y="13.2" width="15.6" height="3.4" fill="#efefef"/></svg>
<svg style="left:1175.8px;top:96.5px" width="6.4" height="3.6" viewBox="0 0 6.4 3.6" fill="none" stroke="#555" stroke-width="1.4" stroke-linecap="round" stroke-linejoin="round"><path d="M.7 .7 L3.2 2.9000000000000004 L5.7 .7"/></svg>
<svg style="left:1154px;top:122px" width="16" height="16" viewBox="0 0 16 16" ><path d="M8 2.5 H.5 V10.5 H5" fill="none" stroke="#c6c6c6" stroke-width="1"/><path d="M5.4 8.6 L12.4 .9 Q13.4 .1 14.4 1 Q15.2 2 14.4 3 L7.4 10.6 L4.4 11.6 Z" fill="#d8e9f7" stroke="#a9cdea" stroke-width=".9" stroke-linejoin="round"/><rect x="-.8" y="12.4" width="15.6" height="3.4" fill="#efefef"/></svg>
<svg style="left:1175.8px;top:128.4px" width="6.4" height="3.6" viewBox="0 0 6.4 3.6" fill="none" stroke="#555" stroke-width="1.4" stroke-linecap="round" stroke-linejoin="round"><path d="M.7 .7 L3.2 2.9000000000000004 L5.7 .7"/></svg>
<div class="sep" style="left:1196.2px"></div>
<svg style="left:1217px;top:84px" width="30" height="31" viewBox="0 0 30 31" ><rect x=".5" y="2.5" width="20" height="27" fill="#fdfdfd" stroke="#62ace0" stroke-width="1"/><g transform="translate(18.9 8.15) rotate(45)"><rect x="-8.6" y="-3.9" width="17.2" height="7.8" fill="#e8e8e8"/><rect x="-4.6" y="-8.6" width="9.2" height="5" fill="#e8e8e8"/><rect x="-3.6" y="-7.3" width="7.2" height="4.6" fill="#fff" stroke="#62ace0" stroke-width="1"/><rect x="-7.1" y="-2.4" width="14.2" height="4.8" fill="#fff" stroke="#62ace0" stroke-width="1"/><rect x="-7.1" y=".2" width="14.2" height="2.4" fill="#62ace0"/></g><g transform="translate(10.7 16.6) rotate(44)"><rect x="-6.5" y="-2.25" width="13" height="4.5" fill="#fff" stroke="#62ace0" stroke-width=".95"/><path d="M-4.6 0 H4.6" stroke="#62ace0" stroke-width="1.5" stroke-linecap="round"/></g></svg>
<svg style="left:1248.6px;top:98.2px" width="6.4" height="3.6" viewBox="0 0 6.4 3.6" fill="none" stroke="#555" stroke-width="1.4" stroke-linecap="round" stroke-linejoin="round"><path d="M.7 .7 L3.2 2.9000000000000004 L5.7 .7"/></svg>
<div class="t lbl" style="left:1234px;top:121.1px;font-size:11px">Sensitivity</div>
<div class="sep" style="left:1273.5px"></div>
<svg style="left:1291.6px;top:85.6px" width="29" height="28.4" viewBox="0 0 29 28.4" ><rect x=".6" y=".6" width="27.4" height="27.2" fill="#ebe7e5" stroke="#e0714c" stroke-width="1.2"/><g fill="#ebe8e7" stroke="#e0714c" stroke-width="1"><rect x="4" y="4.2" width="8.6" height="8.2"/><rect x="15.6" y="4.2" width="8.6" height="8.2"/><rect x="4" y="15.6" width="8.6" height="8.2"/><rect x="15.6" y="15.6" width="8.6" height="8.2"/></g></svg>
<div class="t lbl" style="left:1306px;top:121.1px;font-size:11px">Add-ins</div>
<div class="sep" style="left:1338.5px"></div>
<svg style="left:1356px;top:83px" width="32" height="29" viewBox="0 0 32 29" ><rect x="3.5" y="6.5" width="28" height="21" fill="#fdfdfd" stroke="#858585" stroke-width="1"/><rect x="5.5" y="8.5" width="24" height="17" fill="#fff" stroke="#858585" stroke-width="1"/><path d="M9 13.5 H29.5 M23.5 13.5 V25.5" stroke="#858585" stroke-width="1"/><path d="M6.6 1.1 H12.6 L9.6 7.1 H13.4 L2.4 20.1 L5.2 10.9 H1 Z" fill="#fde2bd" stroke="#f4ab5f" stroke-width=".95" stroke-linejoin="round"/></svg>
<div class="t lbl" style="left:1373.5px;top:121.1px;font-size:11px">Designer</div>
<svg style="left:1405px;top:86px" width="31" height="28" viewBox="0 0 31 28" ><defs><linearGradient id="cg1" x1="0" y1="0" x2="0" y2="1"><stop offset="0" stop-color="#74d3ff"/><stop offset=".26" stop-color="#4babf0"/><stop offset=".56" stop-color="#74c8a2"/><stop offset=".8" stop-color="#c4d66c"/><stop offset="1" stop-color="#ffd748"/></linearGradient><linearGradient id="cg2" x1=".85" y1="0" x2=".3" y2="1"><stop offset="0" stop-color="#bd89f4"/><stop offset=".45" stop-color="#ee8fc4"/><stop offset=".8" stop-color="#fba79a"/><stop offset="1" stop-color="#ffbd8c"/></linearGradient><linearGradient id="cg3" x1="0" y1="0" x2="1" y2="1"><stop offset="0" stop-color="#5a70da"/><stop offset="1" stop-color="#4c93ec"/></linearGradient><linearGradient id="cg4" x1="0" y1="0" x2="1" y2="1"><stop offset="0" stop-color="#ffa47c"/><stop offset="1" stop-color="#e6746c"/></linearGradient></defs><path d="M16.9 .8 H19.4 Q21.6 .8 22.3 3 L23.8 7.4 H21.5 Q19 7.3 18.6 8.3 H14.6 Z" fill="url(#cg3)"/><path d="M7 20.2 H9.2 Q10.9 20.2 11.1 19.5 H15.3 L13.1 26.8 H11.6 Q9.2 26.8 8.5 24.6 Z" fill="url(#cg4)"/><path d="M7.3 .8 H16.9 L11.4 18.6 Q10.9 20.2 9.2 20.2 H3 Q-.3 20.2 .5 17 L4 3.6 Q4.7 .8 7.3 .8 Z" fill="url(#cg1)"/><path d="M21.5 7.2 H26.8 Q30.4 7.2 29.6 10.4 L26.2 23.6 Q25.4 26.8 22.4 26.8 H13.1 L18.3 9.4 Q18.9 7.2 21.5 7.2 Z" fill="url(#cg2)"/></svg>
<div class="t lbl" style="left:1420px;top:121.1px;font-size:11px">Copilot</div>
<div class="abs" style="left:8px;top:150.5px;width:1476px;height:1px;background:#c9c9c9"></div>
<!-- ===== LEFT PANEL ===== -->
<div class="abs" style="left:8px;top:151.5px;width:249px;height:719.5px;background:#e9eaee"></div><div class="t num" style="top:162.8px">1</div><div class="thumb" style="top:162px"><div class="sc" style="top:0px"><div style="position:absolute;left:0;top:305px;width:1150px;text-align:center;font-size:54px;font-weight:bold;color:#303030;letter-spacing:.3px">FY26 Master Roadmap</div><div style="position:absolute;left:0;top:436px;width:1150px;text-align:center;font-size:21px;color:#666">Exported from Roadmap.One on 18 Nov 2025</div></div></div><div class="t num" style="top:281.8px">2</div><div class="abs" style="left:36.3px;top:277.8px;width:187.6px;height:108.2px;border-radius:9px;background:#bb4522"></div><div class="thumb" style="top:281px;left:39.6px;width:181px;height:102px;box-shadow:none;border-radius:6px"><div class="sc"><div class="title" style="top:16px">All Objectives - Cost</div><table class="g th"><colgroup><col style="width:352px"><col style="width:150.5px"><col style="width:150.5px"><col style="width:150.5px"><col style="width:150.5px"><col style="width:142px"></colgroup><tr class="h"><td>Name</td><td>Q1</td><td>Q2</td><td>Q3</td><td>Q4</td><td>Total</td></tr><tr class="all"><td>All Objectives</td><td>£1,321,344 (100.0%)</td><td>£52,920 (5.7%)</td><td>£0 (0.0%)</td><td>£0 (0.0%)</td><td>£1,374,264 (100.0%)</td></tr><tr class="o"><td style="color:#f5820b">Activate &gt;3000 new customers</td><td>£141,156 (10.7%)</td><td>£0 (0.0%)</td><td>£0 (0.0%)</td><td>£0 (0.0%)</td><td>£141,156 (3.0%)</td></tr><tr class="o"><td style="color:#2f8f26">Expand into Sweden</td><td>£246,532 (18.7%)</td><td>£23,526 (2.5%)</td><td>£0 (0.0%)</td><td>£0 (0.0%)</td><td>£270,058 (5.6%)</td></tr><tr class="o"><td style="color:#0e8a8a">Customer errors &lt;0.25%</td><td>£0 (0.0%)</td><td>£0 (0.0%)</td><td>£0 (0.0%)</td><td>£0 (0.0%)</td><td>£0 (0.0%)</td></tr><tr class="o"><td style="color:#8b0f8f">Migrate from Oracle to Postgres</td><td>£131,328 (9.9%)</td><td>£0 (0.0%)</td><td>£0 (0.0%)</td><td>£0 (0.0%)</td><td>£131,328 (2.7%)</td></tr><tr class="o"><td style="color:#f7cc58">Renewal Churn &lt;15%</td><td>£94,848 (7.2%)</td><td>£0 (0.0%)</td><td>£0 (0.0%)</td><td>£0 (0.0%)</td><td>£94,848 (2.0%)</td></tr><tr class="o"><td style="color:#a6eaf0">Contact centre AHT &lt;180secs</td><td>£176,364 (13.3%)</td><td>£0 (0.0%)</td><td>£0 (0.0%)</td><td>£0 (0.0%)</td><td>£176,364 (3.7%)</td></tr><tr class="o"><td style="color:#ef6f6c">Avoid £350k in Salesforce Licence cost</td><td>£127,374 (9.6%)</td><td>£0 (0.0%)</td><td>£0 (0.0%)</td><td>£0 (0.0%)</td><td>£127,374 (2.7%)</td></tr><tr class="o"><td style="color:#3a5fd9">Onboarding conversion &gt;30%</td><td>£403,742 (30.6%)</td><td>£29,394 (3.1%)</td><td>£0 (0.0%)</td><td>£0 (0.0%)</td><td>£433,136 (9.1%)</td></tr><tr class="u"><td>Unallocated WIPs</td><td>£0 (0.0%)</td><td>£880,436 (0.0%)</td><td>£1,264,512 (0.0%)</td><td>£1,265,104 (0.0%)</td><td>£3,410,052 (0.0%)</td></tr><tr class="tot"><td>Total Resources</td><td>£1,321,344 (0.0%)</td><td>£933,356 (0.0%)</td><td>£1,264,512 (0.0%)</td><td>£1,265,104 (0.0%)</td><td>£4,784,316 (0.0%)</td></tr></table></div></div><div class="t num" style="top:402.8px">3</div><div class="thumb" style="top:402px"><div class="sc" style="top:-0.6px"><div class="title" style="top:16px">All Objectives - Capacity</div><table class="g th"><colgroup><col style="width:352px"><col style="width:150.5px"><col style="width:150.5px"><col style="width:150.5px"><col style="width:150.5px"><col style="width:142px"></colgroup><tr class="h"><td>Name</td><td>Q1</td><td>Q2</td><td>Q3</td><td>Q4</td><td>Total</td></tr><tr class="all"><td>All Objectives</td><td>1,502.0 (100.0%)</td><td>1,502.0 (100.0%)</td><td>0.0 (0.0%)</td><td>0.0 (0.0%)</td><td>3,004.0<br>(100.0%)</td></tr><tr class="o"><td style="color:#f5820b">Activate &gt;3000 new customers</td><td>9.0 (10.0%)</td><td>0.0 (0.0%)</td><td>0.0 (0.0%)</td><td>0.0 (0.0%)</td><td>180.0 (3.0%)</td></tr><tr class="o"><td style="color:#2f8f26">Expand into Sweden</td><td>12.0 (18.0%)</td><td>1.0 (2.0%)</td><td>0.0 (0.0%)</td><td>0.0 (0.0%)</td><td>270.0 (5.6%)</td></tr><tr class="o"><td style="color:#0e8a8a">Customer errors &lt;0.25%</td><td>0.0 (0.0%)</td><td>0.0 (0.0%)</td><td>0.0 (0.0%)</td><td>0.0 (0.0%)</td><td>0.0 (0.0%)</td></tr><tr class="o"><td style="color:#8b0f8f">Migrate from Oracle to Postgres</td><td>6.0 (9.9%)</td><td>0.0 (0.0%)</td><td>0.0 (0.0%)</td><td>0.0 (0.0%)</td><td>131.0 (2.7%)</td></tr><tr class="o"><td style="color:#f7cc58">Renewal Churn &lt;15%</td><td>4.0 (7.2%)</td><td>0.0 (0.0%)</td><td>0.0 (0.0%)</td><td>0.0 (0.0%)</td><td>94.0 (2.0%)</td></tr><tr class="o"><td style="color:#a6eaf0">Contact centre AHT &lt;180secs</td><td>8.0 (13.3%)</td><td>0.0 (0.0%)</td><td>0.0 (0.0%)</td><td>0.0 (0.0%)</td><td>176.0 (3.7%)</td></tr><tr class="o"><td style="color:#ef6f6c">Avoid £350k in Salesforce Licence cost</td><td>6.0 (9.6%)</td><td>0.0 (0.0%)</td><td>0.0 (0.0%)</td><td>0.0 (0.0%)</td><td>127.0 (2.7%)</td></tr><tr class="o"><td style="color:#3a5fd9">Onboarding conversion &gt;30%</td><td>18.0 (30.6%)</td><td>1.0 (3.1%)</td><td>0.0 (0.0%)</td><td>0.0 (0.0%)</td><td>433.0 (9.1%)</td></tr><tr class="u"><td>Unallocated WIPs</td><td>0.0 (0.0%)</td><td>880.0 (0.0%)</td><td>1,264.0 (0.0%)</td><td>1,265.0 (0.0%)</td><td>3,410.0<br>(0.0%)</td></tr><tr class="tot"><td>Total Resources</td><td>1,321.0 (0.0%)</td><td>933.0 (0.0%)</td><td>1,264.0 (0.0%)</td><td>1,265.0 (0.0%)</td><td>4,784.0<br>(0.0%)</td></tr></table></div></div><div class="t num" style="top:522.8px">4</div><div class="thumb" style="top:522px"><div class="sc" style="top:-1px"><div class="title" style="top:16px">Gartner RGT - Cost - By Objectives</div><table class="g th"><colgroup><col style="width:352px"><col style="width:150.5px"><col style="width:150.5px"><col style="width:150.5px"><col style="width:150.5px"><col style="width:142px"></colgroup><tr class="h"><td>Name</td><td>Q1</td><td>Q2</td><td>Q3</td><td>Q4</td><td>Total</td></tr><tr class="grp"><td style="background:#84cc16">Run</td><td style="background:#84cc16">£141,156 (10.7%)</td><td style="background:#84cc16">£23,526 (2.5%)</td><td style="background:#84cc16">£0 (0.0%)</td><td style="background:#84cc16">£0 (0.0%)</td><td style="background:#84cc16">£270,058 (5.6%)</td></tr><tr class="o"><td style="color:#8b0f8f">Migrate from Oracle to Postgres</td><td>£131,328 (9.9%)</td><td>£0 (0.0%)</td><td>£0 (0.0%)</td><td>£0 (0.0%)</td><td>£131,328 (2.7%)</td></tr><tr class="o"><td style="color:#ef6f6c">Avoid £350k in Salesforce Licence cost</td><td>£127,374 (9.6%)</td><td>£0 (0.0%)</td><td>£0 (0.0%)</td><td>£0 (0.0%)</td><td>£127,374 (2.7%)</td></tr><tr class="grp"><td style="background:#06b6d4">Grow</td><td style="background:#06b6d4">£141,156 (10.7%)</td><td style="background:#06b6d4">£23,526 (2.5%)</td><td style="background:#06b6d4">£0 (0.0%)</td><td style="background:#06b6d4">£0 (0.0%)</td><td style="background:#06b6d4">£270,058 (5.6%)</td></tr><tr class="o"><td style="color:#f5820b">Activate &gt;3000 new customers</td><td>£141,156 (10.7%)</td><td>£0 (0.0%)</td><td>£0 (0.0%)</td><td>£0 (0.0%)</td><td>£141,156 (3.0%)</td></tr><tr class="o"><td style="color:#0e8a8a">Customer errors &lt;0.25%</td><td>£0 (0.0%)</td><td>£0 (0.0%)</td><td>£0 (0.0%)</td><td>£0 (0.0%)</td><td>£0 (0.0%)</td></tr><tr class="o"><td style="color:#f7cc58">Renewal Churn &lt;15%</td><td>£94,848 (7.2%)</td><td>£0 (0.0%)</td><td>£0 (0.0%)</td><td>£0 (0.0%)</td><td>£94,848 (2.0%)</td></tr><tr class="o"><td style="color:#a6eaf0">Contact centre AHT &lt;180secs</td><td>£176,364 (13.3%)</td><td>£0 (0.0%)</td><td>£0 (0.0%)</td><td>£0 (0.0%)</td><td>£176,364 (3.7%)</td></tr><tr class="o"><td style="color:#3a5fd9">Onboarding conversion &gt;30%</td><td>£403,742 (30.6%)</td><td>£29,394 (3.1%)</td><td>£0 (0.0%)</td><td>£0 (0.0%)</td><td>£433,136 (9.1%)</td></tr><tr class="grp"><td style="background:#8b5cf6">Transform</td><td style="background:#8b5cf6">£141,156 (10.7%)</td><td style="background:#8b5cf6">£23,526 (2.5%)</td><td style="background:#8b5cf6">£0 (0.0%)</td><td style="background:#8b5cf6">£0 (0.0%)</td><td style="background:#8b5cf6">£270,058 (5.6%)</td></tr><tr class="o"><td style="color:#2f8f26">Expand into Sweden</td><td>£246,532 (18.7%)</td><td>£23,526 (2.5%)</td><td>£0 (0.0%)</td><td>£0 (0.0%)</td><td>£270,058 (5.6%)</td></tr><tr class="u"><td>Unallocated WIPs</td><td>£0 (0.0%)</td><td>£880,436 (0.0%)</td><td>£1,264,512 (0.0%)</td><td>£1,265,104 (0.0%)</td><td>£3,410,052 (0.0%)</td></tr><tr class="tot"><td>Total Resources</td><td>£1,321,344 (0.0%)</td><td>£933,356 (0.0%)</td><td>£1,264,512 (0.0%)</td><td>£1,265,104 (0.0%)</td><td>£4,784,316 (0.0%)</td></tr></table></div></div><div class="t num" style="top:642.8px">5</div><div class="thumb" style="top:642px"><div class="sc" style="top:-1px"><div class="title" style="top:16px">Gartner RGT - Capacity - By Objectives</div><table class="g th"><colgroup><col style="width:352px"><col style="width:150.5px"><col style="width:150.5px"><col style="width:150.5px"><col style="width:150.5px"><col style="width:142px"></colgroup><tr class="h"><td>Name</td><td>Q1</td><td>Q2</td><td>Q3</td><td>Q4</td><td>Total</td></tr><tr class="grp"><td style="background:#84cc16">Run</td><td style="background:#84cc16">12.0 (19.5%)</td><td style="background:#84cc16">0.0 (0.0%)</td><td style="background:#84cc16">0.0 (0.0%)</td><td style="background:#84cc16">0.0 (0.0%)</td><td style="background:#84cc16">258.0<br>(5.4%)</td></tr><tr class="o"><td style="color:#8b0f8f">Migrate from Oracle to Postgres</td><td>6.0 (9.9%)</td><td>0.0 (0.0%)</td><td>0.0 (0.0%)</td><td>0.0 (0.0%)</td><td>131.0 (2.7%)</td></tr><tr class="o"><td style="color:#ef6f6c">Avoid £350k in Salesforce Licence cost</td><td>6.0 (9.6%)</td><td>0.0 (0.0%)</td><td>0.0 (0.0%)</td><td>0.0 (0.0%)</td><td>127.0 (2.7%)</td></tr><tr class="grp"><td style="background:#06b6d4">Grow</td><td style="background:#06b6d4">40.0 (61.8%)</td><td style="background:#06b6d4">1.0 (3.1%)</td><td style="background:#06b6d4">0.0 (0.0%)</td><td style="background:#06b6d4">0.0 (0.0%)</td><td style="background:#06b6d4">845.0<br>(17.7%)</td></tr><tr class="o"><td style="color:#f5820b">Activate &gt;3000 new customers</td><td>9.0 (10.0%)</td><td>0.0 (0.0%)</td><td>0.0 (0.0%)</td><td>0.0 (0.0%)</td><td>180.0 (3.0%)</td></tr><tr class="o"><td style="color:#0e8a8a">Customer errors &lt;0.25%</td><td>0.0 (0.0%)</td><td>0.0 (0.0%)</td><td>0.0 (0.0%)</td><td>0.0 (0.0%)</td><td>0.0 (0.0%)</td></tr><tr class="o"><td style="color:#f7cc58">Renewal Churn &lt;15%</td><td>4.0 (7.2%)</td><td>0.0 (0.0%)</td><td>0.0 (0.0%)</td><td>0.0 (0.0%)</td><td>94.0 (2.0%)</td></tr><tr class="o"><td style="color:#a6eaf0">Contact centre AHT &lt;180secs</td><td>8.0 (13.3%)</td><td>0.0 (0.0%)</td><td>0.0 (0.0%)</td><td>0.0 (0.0%)</td><td>176.0 (3.7%)</td></tr><tr class="o"><td style="color:#3a5fd9">Onboarding conversion &gt;30%</td><td>18.0 (30.6%)</td><td>1.0 (3.1%)</td><td>0.0 (0.0%)</td><td>0.0 (0.0%)</td><td>433.0 (9.1%)</td></tr><tr class="grp"><td style="background:#8b5cf6">Transform</td><td style="background:#8b5cf6">12.0 (18.7%)</td><td style="background:#8b5cf6">1.0 (2.5%)</td><td style="background:#8b5cf6">0.0 (0.0%)</td><td style="background:#8b5cf6">0.0 (0.0%)</td><td style="background:#8b5cf6">270.0 (5.6%)</td></tr><tr class="o"><td style="color:#2f8f26">Expand into Sweden</td><td>12.0 (18.0%)</td><td>1.0 (2.0%)</td><td>0.0 (0.0%)</td><td>0.0 (0.0%)</td><td>270.0 (5.6%)</td></tr><tr class="u"><td>Unallocated WIPs</td><td>0.0 (0.0%)</td><td>880.0 (0.0%)</td><td>1,264.0 (0.0%)</td><td>1,265.0 (0.0%)</td><td>3,410.0<br>(0.0%)</td></tr><tr class="tot"><td>Total Resources</td><td>1,321.0 (0.0%)</td><td>933.0 (0.0%)</td><td>1,264.0 (0.0%)</td><td>1,265.0 (0.0%)</td><td>4,784.0<br>(0.0%)</td></tr></table></div></div><div class="t num" style="top:762.8px">6</div><div class="thumb" style="top:762px"><div class="sc" style="top:-1px"><div class="title" style="top:16px">Opex vs Capex - Cost - By Objectives</div><table class="g th"><colgroup><col style="width:352px"><col style="width:150.5px"><col style="width:150.5px"><col style="width:150.5px"><col style="width:150.5px"><col style="width:142px"></colgroup><tr class="h"><td>Name</td><td>Q1</td><td>Q2</td><td>Q3</td><td>Q4</td><td>Total</td></tr><tr class="grp"><td style="background:#fff;color:#000;font-weight:normal">Untagged</td><td style="background:#fdf1c7;color:#000">£1,321,344 (100.0%)</td><td style="background:#fdf1c7;color:#000">£52,920 (5.7%)</td><td style="background:#fdf1c7;color:#000">£0 (0.0%)</td><td style="background:#fdf1c7;color:#000">£0 (0.0%)</td><td style="background:#fdf1c7;color:#000">£1,374,264 (100.0%)</td></tr><tr class="u"><td>Unallocated WIPs</td><td>£0 (0.0%)</td><td>£880,436 (0.0%)</td><td>£1,264,512 (0.0%)</td><td>£1,265,104 (0.0%)</td><td>£3,410,052 (0.0%)</td></tr><tr class="tot"><td>Total Resources</td><td>£1,321,344 (0.0%)</td><td>£933,356 (0.0%)</td><td>£1,264,512 (0.0%)</td><td>£1,265,104 (0.0%)</td><td>£4,784,316 (0.0%)</td></tr></table></div></div><div class="abs" style="left:243px;top:155px;width:11px;height:712px;border-radius:5.5px;background:#efeff2"></div><div class="abs" style="left:243px;top:155px;width:11px;height:386px;border-radius:5.5px;background:#808080"></div>
<!-- ===== EDITOR ===== -->
<div class="abs" style="left:257px;top:151.5px;width:5px;height:719.5px;background:#f2f2f3"></div><div class="abs" style="left:262px;top:151.5px;width:1222px;height:719.5px;background:#f5f5f5"></div><div class="abs" style="left:1475.5px;top:176px;width:9px;height:689px;background:#eeeeee"></div><div class="abs" style="left:286px;top:176px;width:1189.5px;height:689.5px;background:#e8e8e8"></div><div class="abs" style="left:278px;top:152px;width:1206px;height:15.5px;background:#fdfdfd;border-bottom:1px solid #dcdcdc"></div><div class="abs" style="left:262px;top:167.5px;width:15.5px;height:697.5px;background:#fdfdfd;border-right:1px solid #d4d4d4"></div><div class="abs" style="left:262px;top:865px;width:1222px;height:6px;background:#f6f6f6;border-top:1px solid #bdbdbd"></div><div class="abs" style="left:262px;top:152px;width:16px;height:16px;background:linear-gradient(135deg,#fafafa,#e9e9e9);border-right:1px solid #d8d8d8;border-bottom:1px solid #d8d8d8"></div><svg style="left:0;top:0" width="1491" height="909" viewBox="0 0 1491 909"><path d="M317.55 158 V167.5 M328.89 163.2 V167.5 M340.23 163.2 V167.5 M351.57 163.2 V167.5 M362.91 158 V167.5 M374.25 163.2 V167.5 M385.59 163.2 V167.5 M396.93 163.2 V167.5 M408.27 158 V167.5 M419.61 163.2 V167.5 M430.95 163.2 V167.5 M442.29 163.2 V167.5 M453.63 158 V167.5 M464.97 163.2 V167.5 M476.31 163.2 V167.5 M487.65 163.2 V167.5 M498.99 158 V167.5 M510.33 163.2 V167.5 M521.67 163.2 V167.5 M533.01 163.2 V167.5 M544.35 158 V167.5 M555.69 163.2 V167.5 M567.03 163.2 V167.5 M578.37 163.2 V167.5 M589.71 158 V167.5 M601.05 163.2 V167.5 M612.39 163.2 V167.5 M623.73 163.2 V167.5 M635.07 158 V167.5 M646.41 163.2 V167.5 M657.75 163.2 V167.5 M669.09 163.2 V167.5 M680.43 158 V167.5 M691.77 163.2 V167.5 M703.11 163.2 V167.5 M714.45 163.2 V167.5 M725.79 158 V167.5 M737.13 163.2 V167.5 M748.47 163.2 V167.5 M759.81 163.2 V167.5 M771.15 158 V167.5 M782.49 163.2 V167.5 M793.83 163.2 V167.5 M805.17 163.2 V167.5 M816.51 158 V167.5 M827.85 163.2 V167.5 M839.19 163.2 V167.5 M850.53 163.2 V167.5 M861.87 158 V167.5 M873.21 163.2 V167.5 M884.55 163.2 V167.5 M895.89 163.2 V167.5 M907.23 158 V167.5 M918.57 163.2 V167.5 M929.91 163.2 V167.5 M941.25 163.2 V167.5 M952.59 158 V167.5 M963.93 163.2 V167.5 M975.27 163.2 V167.5 M986.61 163.2 V167.5 M997.95 158 V167.5 M1009.29 163.2 V167.5 M1020.63 163.2 V167.5 M1031.97 163.2 V167.5 M1043.31 158 V167.5 M1054.65 163.2 V167.5 M1065.99 163.2 V167.5 M1077.33 163.2 V167.5 M1088.67 158 V167.5 M1100.01 163.2 V167.5 M1111.35 163.2 V167.5 M1122.69 163.2 V167.5 M1134.03 158 V167.5 M1145.37 163.2 V167.5 M1156.71 163.2 V167.5 M1168.05 163.2 V167.5 M1179.39 158 V167.5 M1190.73 163.2 V167.5 M1202.07 163.2 V167.5 M1213.41 163.2 V167.5 M1224.75 158 V167.5 M1236.09 163.2 V167.5 M1247.43 163.2 V167.5 M1258.77 163.2 V167.5 M1270.11 158 V167.5 M1281.45 163.2 V167.5 M1292.79 163.2 V167.5 M1304.13 163.2 V167.5 M1315.47 158 V167.5 M1326.81 163.2 V167.5 M1338.15 163.2 V167.5 M1349.49 163.2 V167.5 M1360.83 158 V167.5 M1372.17 163.2 V167.5 M1383.51 163.2 V167.5 M1394.85 163.2 V167.5 M1406.19 158 V167.5 M1417.53 163.2 V167.5 M1428.87 163.2 V167.5 M1440.21 163.2 V167.5 M1451.55 158 V167.5 M309.6 156 V170.5 M1458.6 156 V170.5 " stroke="#b4b4b4" stroke-width="1" fill="none"/><path d="M273.2 201.73 H277.5 M273.2 213.07 H277.5 M268 224.41 H277.5 M273.2 235.75 H277.5 M273.2 247.09 H277.5 M273.2 258.43 H277.5 M268 269.77 H277.5 M273.2 281.11 H277.5 M273.2 292.45 H277.5 M273.2 303.79 H277.5 M268 315.13 H277.5 M273.2 326.47 H277.5 M273.2 337.81 H277.5 M273.2 349.15 H277.5 M268 360.49 H277.5 M273.2 371.83 H277.5 M273.2 383.17 H277.5 M273.2 394.51 H277.5 M268 405.85 H277.5 M273.2 417.19 H277.5 M273.2 428.53 H277.5 M273.2 439.87 H277.5 M268 451.21 H277.5 M273.2 462.55 H277.5 M273.2 473.89 H277.5 M273.2 485.23 H277.5 M268 496.57 H277.5 M273.2 507.91 H277.5 M273.2 519.25 H277.5 M273.2 530.59 H277.5 M268 541.93 H277.5 M273.2 553.27 H277.5 M273.2 564.61 H277.5 M273.2 575.95 H277.5 M268 587.29 H277.5 M273.2 598.63 H277.5 M273.2 609.97 H277.5 M273.2 621.31 H277.5 M268 632.65 H277.5 M273.2 643.99 H277.5 M273.2 655.33 H277.5 M273.2 666.67 H277.5 M268 678.01 H277.5 M273.2 689.35 H277.5 M273.2 700.69 H277.5 M273.2 712.03 H277.5 M268 723.37 H277.5 M273.2 734.71 H277.5 M273.2 746.05 H277.5 M273.2 757.39 H277.5 M268 768.73 H277.5 M273.2 780.07 H277.5 M273.2 791.41 H277.5 M273.2 802.75 H277.5 M268 814.09 H277.5 M273.2 825.43 H277.5 M273.2 836.77 H277.5 M266 196.5 H280.5 M266 842.9 H280.5 " stroke="#b4b4b4" stroke-width="1" fill="none"/><text x="340.2" y="160.3" font-size="9.2" fill="#707070" text-anchor="middle" font-family="Liberation Sans">12</text><text x="385.6" y="160.3" font-size="9.2" fill="#707070" text-anchor="middle" font-family="Liberation Sans">11</text><text x="430.9" y="160.3" font-size="9.2" fill="#707070" text-anchor="middle" font-family="Liberation Sans">10</text><text x="476.3" y="160.3" font-size="9.2" fill="#707070" text-anchor="middle" font-family="Liberation Sans">9</text><text x="521.7" y="160.3" font-size="9.2" fill="#707070" text-anchor="middle" font-family="Liberation Sans">8</text><text x="567.0" y="160.3" font-size="9.2" fill="#707070" text-anchor="middle" font-family="Liberation Sans">7</text><text x="612.4" y="160.3" font-size="9.2" fill="#707070" text-anchor="middle" font-family="Liberation Sans">6</text><text x="657.8" y="160.3" font-size="9.2" fill="#707070" text-anchor="middle" font-family="Liberation Sans">5</text><text x="703.1" y="160.3" font-size="9.2" fill="#707070" text-anchor="middle" font-family="Liberation Sans">4</text><text x="748.5" y="160.3" font-size="9.2" fill="#707070" text-anchor="middle" font-family="Liberation Sans">3</text><text x="793.8" y="160.3" font-size="9.2" fill="#707070" text-anchor="middle" font-family="Liberation Sans">2</text><text x="839.2" y="160.3" font-size="9.2" fill="#707070" text-anchor="middle" font-family="Liberation Sans">1</text><text x="884.5" y="160.3" font-size="9.2" fill="#707070" text-anchor="middle" font-family="Liberation Sans">0</text><text x="929.9" y="160.3" font-size="9.2" fill="#707070" text-anchor="middle" font-family="Liberation Sans">1</text><text x="975.3" y="160.3" font-size="9.2" fill="#707070" text-anchor="middle" font-family="Liberation Sans">2</text><text x="1020.6" y="160.3" font-size="9.2" fill="#707070" text-anchor="middle" font-family="Liberation Sans">3</text><text x="1066.0" y="160.3" font-size="9.2" fill="#707070" text-anchor="middle" font-family="Liberation Sans">4</text><text x="1111.3" y="160.3" font-size="9.2" fill="#707070" text-anchor="middle" font-family="Liberation Sans">5</text><text x="1156.7" y="160.3" font-size="9.2" fill="#707070" text-anchor="middle" font-family="Liberation Sans">6</text><text x="1202.1" y="160.3" font-size="9.2" fill="#707070" text-anchor="middle" font-family="Liberation Sans">7</text><text x="1247.4" y="160.3" font-size="9.2" fill="#707070" text-anchor="middle" font-family="Liberation Sans">8</text><text x="1292.8" y="160.3" font-size="9.2" fill="#707070" text-anchor="middle" font-family="Liberation Sans">9</text><text x="1338.2" y="160.3" font-size="9.2" fill="#707070" text-anchor="middle" font-family="Liberation Sans">10</text><text x="1383.5" y="160.3" font-size="9.2" fill="#707070" text-anchor="middle" font-family="Liberation Sans">11</text><text x="1428.9" y="160.3" font-size="9.2" fill="#707070" text-anchor="middle" font-family="Liberation Sans">12</text><text transform="translate(270.3 201.7) rotate(-90)" font-size="9.2" fill="#707070" text-anchor="middle" font-family="Liberation Sans">7</text><text transform="translate(270.3 247.1) rotate(-90)" font-size="9.2" fill="#707070" text-anchor="middle" font-family="Liberation Sans">6</text><text transform="translate(270.3 292.4) rotate(-90)" font-size="9.2" fill="#707070" text-anchor="middle" font-family="Liberation Sans">5</text><text transform="translate(270.3 337.8) rotate(-90)" font-size="9.2" fill="#707070" text-anchor="middle" font-family="Liberation Sans">4</text><text transform="translate(270.3 383.2) rotate(-90)" font-size="9.2" fill="#707070" text-anchor="middle" font-family="Liberation Sans">3</text><text transform="translate(270.3 428.5) rotate(-90)" font-size="9.2" fill="#707070" text-anchor="middle" font-family="Liberation Sans">2</text><text transform="translate(270.3 473.9) rotate(-90)" font-size="9.2" fill="#707070" text-anchor="middle" font-family="Liberation Sans">1</text><text transform="translate(270.3 519.2) rotate(-90)" font-size="9.2" fill="#707070" text-anchor="middle" font-family="Liberation Sans">0</text><text transform="translate(270.3 564.6) rotate(-90)" font-size="9.2" fill="#707070" text-anchor="middle" font-family="Liberation Sans">1</text><text transform="translate(270.3 610.0) rotate(-90)" font-size="9.2" fill="#707070" text-anchor="middle" font-family="Liberation Sans">2</text><text transform="translate(270.3 655.3) rotate(-90)" font-size="9.2" fill="#707070" text-anchor="middle" font-family="Liberation Sans">3</text><text transform="translate(270.3 700.7) rotate(-90)" font-size="9.2" fill="#707070" text-anchor="middle" font-family="Liberation Sans">4</text><text transform="translate(270.3 746.0) rotate(-90)" font-size="9.2" fill="#707070" text-anchor="middle" font-family="Liberation Sans">5</text><text transform="translate(270.3 791.4) rotate(-90)" font-size="9.2" fill="#707070" text-anchor="middle" font-family="Liberation Sans">6</text><text transform="translate(270.3 836.8) rotate(-90)" font-size="9.2" fill="#707070" text-anchor="middle" font-family="Liberation Sans">7</text></svg>
<div class="slide" style="left:310px;top:197px;box-shadow:0 0 0 1px rgba(0,0,0,.05),0 1px 14px 6px rgba(0,0,0,.055)"><div class="title" style="">All Objectives - Cost</div><table class="g "><colgroup><col style="width:345px"><col style="width:150px"><col style="width:149px"><col style="width:150px"><col style="width:149px"><col style="width:138px"></colgroup><tr class="h" style="height:29px"><td style="height:29px">Name</td><td style="height:29px">Q1</td><td style="height:29px">Q2</td><td style="height:29px">Q3</td><td style="height:29px">Q4</td><td style="height:29px">Total</td></tr><tr class="all" style="height:29px"><td style="height:29px">All Objectives</td><td style="height:29px">£1,321,344 (100.0%)</td><td style="height:29px">£52,920 (5.7%)</td><td style="height:29px">£0 (0.0%)</td><td style="height:29px">£0 (0.0%)</td><td style="height:29px">£1,374,264 (100.0%)</td></tr><tr class="o" style="height:29px"><td style="color:#f5820b;height:29px">Activate &gt;3000 new customers</td><td style="height:29px">£141,156 (10.7%)</td><td style="height:29px">£0 (0.0%)</td><td style="height:29px">£0 (0.0%)</td><td style="height:29px">£0 (0.0%)</td><td style="height:29px">£141,156 (3.0%)</td></tr><tr class="o" style="height:29px"><td style="color:#2f8f26;height:29px">Expand into Sweden</td><td style="height:29px">£246,532 (18.7%)</td><td style="height:29px">£23,526 (2.5%)</td><td style="height:29px">£0 (0.0%)</td><td style="height:29px">£0 (0.0%)</td><td style="height:29px">£270,058 (5.6%)</td></tr><tr class="o" style="height:28px"><td style="color:#0e8a8a;height:28px">Customer errors &lt;0.25%</td><td style="height:28px">£0 (0.0%)</td><td style="height:28px">£0 (0.0%)</td><td style="height:28px">£0 (0.0%)</td><td style="height:28px">£0 (0.0%)</td><td style="height:28px">£0 (0.0%)</td></tr><tr class="o" style="height:29px"><td style="color:#8b0f8f;height:29px">Migrate from Oracle to Postgres</td><td style="height:29px">£131,328 (9.9%)</td><td style="height:29px">£0 (0.0%)</td><td style="height:29px">£0 (0.0%)</td><td style="height:29px">£0 (0.0%)</td><td style="height:29px">£131,328 (2.7%)</td></tr><tr class="o" style="height:29px"><td style="color:#f7cc58;height:29px">Renewal Churn &lt;15%</td><td style="height:29px">£94,848 (7.2%)</td><td style="height:29px">£0 (0.0%)</td><td style="height:29px">£0 (0.0%)</td><td style="height:29px">£0 (0.0%)</td><td style="height:29px">£94,848 (2.0%)</td></tr><tr class="o" style="height:29px"><td style="color:#a6eaf0;height:29px">Contact centre AHT &lt;180secs</td><td style="height:29px">£176,364 (13.3%)</td><td style="height:29px">£0 (0.0%)</td><td style="height:29px">£0 (0.0%)</td><td style="height:29px">£0 (0.0%)</td><td style="height:29px">£176,364 (3.7%)</td></tr><tr class="o" style="height:28px"><td style="color:#ef6f6c;height:28px">Avoid £350k in Salesforce Licence cost</td><td style="height:28px">£127,374 (9.6%)</td><td style="height:28px">£0 (0.0%)</td><td style="height:28px">£0 (0.0%)</td><td style="height:28px">£0 (0.0%)</td><td style="height:28px">£127,374 (2.7%)</td></tr><tr class="o" style="height:29px"><td style="color:#3a5fd9;height:29px">Onboarding conversion &gt;30%</td><td style="height:29px">£403,742 (30.6%)</td><td style="height:29px">£29,394 (3.1%)</td><td style="height:29px">£0 (0.0%)</td><td style="height:29px">£0 (0.0%)</td><td style="height:29px">£433,136 (9.1%)</td></tr><tr class="u" style="height:29px"><td style="height:29px">Unallocated WIPs</td><td style="height:29px">£0 (0.0%)</td><td style="height:29px">£880,436 (0.0%)</td><td style="height:29px">£1,264,512 (0.0%)</td><td style="height:29px">£1,265,104 (0.0%)</td><td style="height:29px">£3,410,052 (0.0%)</td></tr><tr class="tot" style="height:28px"><td style="height:28px">Total Resources</td><td style="height:28px">£1,321,344 (0.0%)</td><td style="height:28px">£933,356 (0.0%)</td><td style="height:28px">£1,264,512 (0.0%)</td><td style="height:28px">£1,265,104 (0.0%)</td><td style="height:28px">£4,784,316 (0.0%)</td></tr></table></div>
<!-- ===== STATUS ===== -->
<div class="abs" style="left:8px;top:870px;width:1476px;height:28px;background:#f4f4f4;border-top:1px solid #c6c6c6"></div><div class="t st" style="left:32px;font-size:12.3px;letter-spacing:.1px">Slide 2 of 11</div><div class="t st" style="left:119.6px;font-size:12.55px;letter-spacing:.13px">English (United States)</div><svg style="left:271px;top:875px" width="18" height="18" viewBox="0 0 18 18" ><circle cx="7.4" cy="3" r="1.8" fill="none" stroke="#555" stroke-width="1.05"/><path d="M1.6 4.6 Q2.6 8 5.4 8.2 L5 12 L3.2 16.2 M13 4.4 Q12.2 8 9.4 8.2 V9.2 M5.4 8.2 H9.4 M7.2 12.2 L6.4 13.6" fill="none" stroke="#555" stroke-width="1.1" stroke-linecap="round" stroke-linejoin="round"/><circle cx="12.6" cy="13" r="4.7" fill="#4a4a4a" stroke="#f4f4f4" stroke-width=".8"/><path d="M12.6 10.4 V13.4" stroke="#fff" stroke-width="1.25" stroke-linecap="round"/><circle cx="12.6" cy="15.4" r=".75" fill="#fff"/></svg><div class="t st" style="left:293.4px;font-size:12.7px;letter-spacing:.1px">Accessibility: Investigate</div><svg style="left:925px;top:876.5px" width="15" height="15" viewBox="0 0 15 15" ><path d="M3 1 H11.6 Q13.6 1 13.6 3 V8.2 L8.4 13.6 H3 Q1 13.6 1 11.6 V3 Q1 1 3 1 Z M13.4 8.2 H10.2 Q8.4 8.2 8.4 10 V13.4" fill="none" stroke="#555" stroke-width="1.05" stroke-linejoin="round"/></svg><div class="t st" style="left:945.6px;font-size:12.5px;letter-spacing:.32px">Notes</div><svg style="left:999.5px;top:876.5px" width="17" height="15" viewBox="0 0 17 15" ><path d="M3 1 H14 Q16 1 16 3 V8.6 Q16 10.6 14 10.6 H7.6 L4.4 14 V10.6 H3 Q1 10.6 1 8.6 V3 Q1 1 3 1 Z" fill="none" stroke="#555" stroke-width="1.05" stroke-linejoin="round"/></svg><div class="t st" style="left:1022px;font-size:12.35px;letter-spacing:.2px">Comments</div><div class="abs" style="left:1096.4px;top:873px;width:30.4px;height:21.6px;border-radius:4px;background:#b9b9b9"></div><svg style="left:1103px;top:877px" width="17" height="14" viewBox="0 0 17 14" ><rect x=".6" y=".6" width="15.4" height="12.4" rx="2.2" fill="none" stroke="#3a3a3a" stroke-width="1.1"/><path d="M2.6 .8 H7 V13 H2.6 Q.8 13 .8 11 V2.8 Q.8 .8 2.6 .8 Z" fill="#3a3a3a"/></svg><svg style="left:1140px;top:876px" width="16" height="16" viewBox="0 0 16 16" ><g fill="none" stroke="#555" stroke-width="1.05"><rect x=".6" y=".6" width="6" height="6" rx="1.2"/><rect x="9.4" y=".6" width="6" height="6" rx="1.2"/><rect x=".6" y="9.4" width="6" height="6" rx="1.2"/><rect x="9.4" y="9.4" width="6" height="6" rx="1.2"/></g></svg><svg style="left:1176px;top:877px" width="16" height="14" viewBox="0 0 16 14" ><rect x=".6" y=".6" width="14.8" height="12.4" rx="2.2" fill="none" stroke="#555" stroke-width="1.05"/><path d="M8 .6 V13" stroke="#555" stroke-width="1.05"/></svg><svg style="left:1212px;top:876.5px" width="16" height="15" viewBox="0 0 16 15" ><path d="M.6 .8 H15 M1.8 .8 V8.4 Q1.8 10 3.4 10 H12.2 Q13.8 10 13.8 8.4 V.8 M7.8 10 V13.4 M4.6 13.6 H11" fill="none" stroke="#555" stroke-width="1.05" stroke-linecap="round"/></svg><div class="abs" style="left:1245px;top:883.5px;width:8px;height:1.2px;background:#777"></div><div class="abs" style="left:1260.4px;top:882.4px;width:99px;height:3.6px;border-radius:2px;background:#bcbcbc"></div><div class="abs" style="left:1309.6px;top:876.2px;width:16px;height:16px;border-radius:50%;background:#fff;box-shadow:0 .5px 2px rgba(0,0,0,.35)"></div><div class="abs" style="left:1366.8px;top:883.5px;width:8px;height:1.2px;background:#666"></div><div class="abs" style="left:1370.2px;top:880.1px;width:1.2px;height:8px;background:#666"></div><div class="t st" style="left:1391.4px;font-size:12.3px;letter-spacing:.4px">160%</div><svg style="left:1444.6px;top:876.6px" width="15" height="15" viewBox="0 0 15 15" ><path d="M.8 5 V.8 H5 M10 .8 H14.2 V5 M14.2 10 V14.2 H10 M5 14.2 H.8 V10 M1.2 1.2 L5.6 5.6 M13.8 1.2 L9.4 5.6 M13.8 13.8 L9.4 9.4 M1.2 13.8 L5.6 9.4" fill="none" stroke="#666" stroke-width="1" stroke-linecap="round" stroke-linejoin="round"/></svg>
</div></div>
</body>
</html>
